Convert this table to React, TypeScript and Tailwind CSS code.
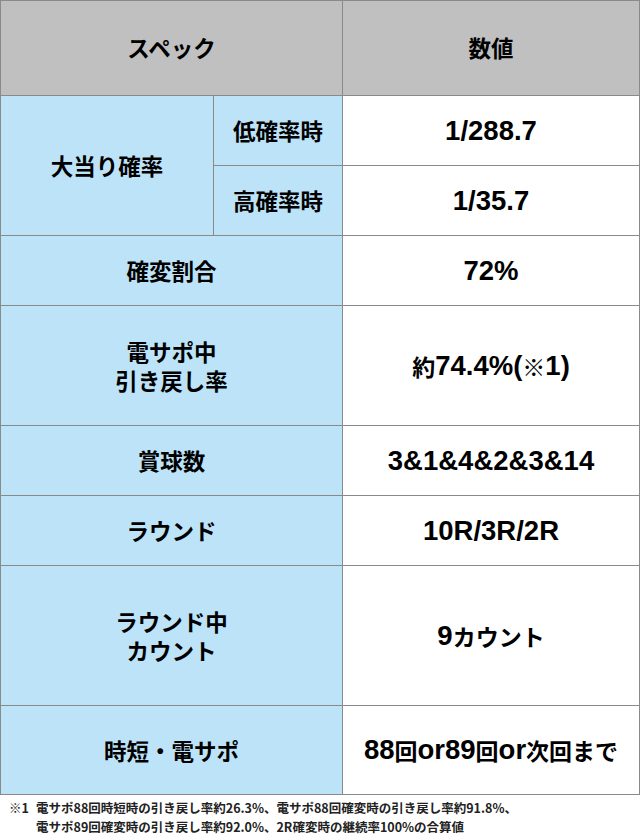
import React from 'react';

const jp = '[font-family:"Noto_Sans_CJK_JP","Noto_Sans",sans-serif]';

// ASCII runs in a Helvetica-like face, Japanese runs in Noto CJK
function Mixed({ text }: { text: string }) {
  const parts = text.split(/([\x20-\x7E]+)/).filter((p) => p !== '');
  return (
    <>
      {parts.map((p, i) =>
        /^[\x20-\x7E]+$/.test(p) ? (
          <span key={i} className='text-[27.5px] [font-family:"Liberation_Sans",Arial,sans-serif] font-bold'>
            {p}
          </span>
        ) : (
          <span key={i} className={`text-[23px] font-bold ${jp}`}>
            {p}
          </span>
        )
      )}
    </>
  );
}

const cell = 'flex items-center justify-center text-center border-r border-b border-[#8a8a8a] text-black';
const label = `${cell} bg-[#bce3f8] text-[22.5px] font-bold leading-[29px] ${jp}`;
const value = `${cell} bg-white leading-[30px]`;

interface Row {
  label: string[];
  value: string;
}

const rows: Row[] = [
  { label: ['確変割合'], value: '72%' },
  { label: ['電サポ中', '引き戻し率'], value: '約74.4%(※1)' },
  { label: ['賞球数'], value: '3&1&4&2&3&14' },
  { label: ['ラウンド'], value: '10R/3R/2R' },
  { label: ['ラウンド中', 'カウント'], value: '9カウント' },
  { label: ['時短・電サポ'], value: '88回or89回or次回まで' },
];

export default function App() {
  return (
    <div className="w-[640px] h-[838px] bg-white overflow-hidden">
      <div className="grid grid-cols-[213px_129px_297px] grid-rows-[95px_70px_70px_70px_120px_70px_70px_140px_89px] border-l border-t border-[#8a8a8a]">
        <div className={`${cell} col-span-2 bg-[#c0c0c0] text-[22.5px] font-bold ${jp}`}>スペック</div>
        <div className={`${cell} bg-[#c0c0c0] text-[22.5px] font-bold ${jp}`}>数値</div>

        <div className={`${label} row-span-2`}>大当り確率</div>
        <div className={label}>低確率時</div>
        <div className={value}>
          <Mixed text="1/288.7" />
        </div>
        <div className={label}>高確率時</div>
        <div className={value}>
          <Mixed text="1/35.7" />
        </div>

        {rows.map((r) => (
          <React.Fragment key={r.value}>
            <div className={`${label} col-span-2 flex-col`}>
              {r.label.map((l) => (
                <span key={l}>{l}</span>
              ))}
            </div>
            <div className={value}>
              <Mixed text={r.value} />
            </div>
          </React.Fragment>
        ))}
      </div>

      <div className={`flex pl-[9px] pt-[3px] text-[12.5px] font-bold leading-[19px] text-[#222] ${jp}`}>
        <span className="w-[27px] shrink-0">※1</span>
        <div>
          <div>電サポ88回時短時の引き戻し率約26.3%、電サポ88回確変時の引き戻し率約91.8%、</div>
          <div>電サポ89回確変時の引き戻し率約92.0%、2R確変時の継続率100%の合算値</div>
        </div>
      </div>
    </div>
  );
}
